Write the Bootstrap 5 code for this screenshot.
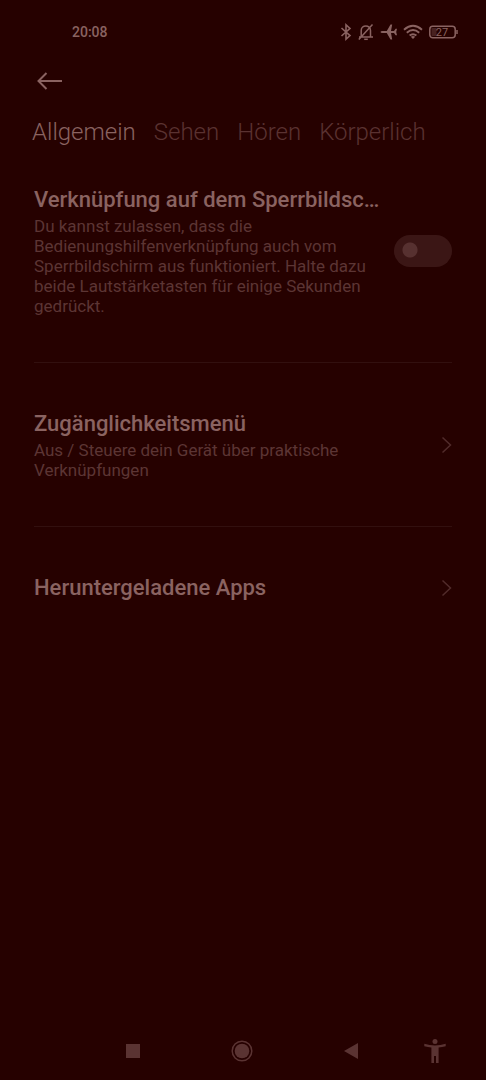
<!DOCTYPE html>
<html lang="de">
<head>
<meta charset="utf-8">
<meta name="viewport" content="width=device-width, initial-scale=1">
<title>Bedienungshilfen</title>
<link href="https://cdn.jsdelivr.net/npm/bootstrap@5.3.0/dist/css/bootstrap.min.css" rel="stylesheet">
<style>
  :root { --bg: #260100; --strong: #8a6361; --tab-off: #5a3231; --muted: #5c3534; --line: #32100f; }
  body { background: var(--bg); color: var(--strong); font-family: Roboto, "Noto Sans", sans-serif; }
  svg { display: block; flex: none; }
  .status { height: 64px; padding: 0 28px 0 72px; font-size: 14px; font-weight: 500; }
  .status-icons { gap: 5px; }
  .topbar { height: 34px; padding: 0 34px; }
  .plain-btn { background: none; border: 0; padding: 0; color: inherit; }
  .tabs { height: 68px; padding: 0 32px; gap: 18px; font-size: 24px; font-weight: 300; }
  .tabs a { color: var(--tab-off); text-decoration: none; }
  .tabs a.active { color: var(--strong); }
  .settings { padding: 0 34px; }
  .setting { padding: 47px 0 46px; gap: 20px; color: inherit; text-decoration: none; }
  .setting + .setting { border-top: 1px solid var(--line); }
  .setting:first-child { padding-top: 20px; }
  .setting-text { flex: 1; min-width: 0; }
  .setting-title { display: block; font-size: 22px; line-height: 28px; font-weight: 500; margin: 0; }
  .setting-desc { display: block; font-size: 17px; line-height: 20px; margin: 2px 0 0; color: var(--muted); }
  .chevron { color: #512b2a; }
  .form-switch .form-check-input.toggle {
    width: 58px; height: 32px; border: 0; border-radius: 16px; margin: 0; float: none;
    background: radial-gradient(circle at 16px 15px, #573130 7px, transparent 8px) #3b1615;
    box-shadow: none;
  }
  .form-switch .form-check-input.toggle:checked {
    background: radial-gradient(circle at 42px 15px, #8a6361 7px, transparent 8px) #4b2423;
  }
  .sysnav { height: 58px; padding: 0 22px 0 78px; color: #5a3332; }
  .sysnav button { width: 58px; height: 48px; }
</style>
</head>
<body>
<div class="d-flex flex-column min-vh-100">
  <header>
    <div class="status d-flex align-items-center justify-content-between">
      <span>20:08</span>
      <div class="status-icons d-flex align-items-center">
        <svg width="12" height="18" viewBox="0 0 12 18" fill="none" stroke="currentColor" stroke-width="1.6" aria-label="Bluetooth"><path d="M1.5 5 10 12.6 6 16.2V1.8l4 3.6L1.5 13"/></svg>
        <svg width="18" height="18" viewBox="0 0 18 18" fill="none" stroke="currentColor" stroke-width="1.5" aria-label="Stumm"><path d="M2 14H16M4.2 13.6V7.5c0-6 9.3-6 9.3 0v6.100M1.800 16.500 15.500 1.500"/><path d="M7.200 16.300h3.600"/></svg>
        <svg width="18" height="18" viewBox="0 0 18 18" fill="currentColor" aria-label="Flugmodus"><path d="M.5 9Q.5 8 2.500 8H6.800L10.500 1.500H12.200L11 8H14L15.600 5.800H17L16.200 9 17 12.200H15.600L14 10H11L12.200 16.500H10.500L6.800 10H2.500Q.5 10 .5 9Z"/></svg>
        <svg width="20" height="18" viewBox="0 0 20 18" fill="none" stroke="currentColor" stroke-width="1.900" aria-label="WLAN"><path d="M1 6.700Q10-1 19 6.700M3.800 9.700Q10 4.300 16.200 9.700M6.600 12.600Q10 9.800 13.400 12.600"/><path d="M7.800 13.700Q10 12.200 12.200 13.700L10 16Z" fill="currentColor" stroke="none"/></svg>
        <svg width="30" height="18" viewBox="0 0 30 18" role="img" aria-label="Akku 27 Prozent"><rect x="3.500" y="5" width="5" height="8" fill="#482120"/><rect x="1.800" y="3.300" width="25.400" height="11.500" rx="3" fill="none" stroke="currentColor" stroke-width="1.500"/><path d="M29 7v4" stroke="currentColor" stroke-width="1.500"/><text x="14" y="13" text-anchor="middle" font-size="11" font-weight="400" fill="currentColor">27</text></svg>
      </div>
    </div>
    <div class="topbar d-flex align-items-center">
      <button class="plain-btn" type="button" aria-label="Zurück"><svg width="30" height="20" viewBox="0 0 30 20" fill="none" stroke="currentColor" stroke-width="2"><path d="M28 10H5M12.500 2 4.500 10l8 8"/></svg></button>
    </div>
    <nav class="tabs d-flex align-items-center" aria-label="Kategorien">
      <a class="active" href="#" aria-current="page">Allgemein</a>
      <a href="#">Sehen</a>
      <a href="#">Hören</a>
      <a href="#">Körperlich</a>
    </nav>
  </header>
  <main class="settings flex-grow-1">
    <div class="setting d-flex align-items-center">
      <label class="setting-text" for="lockscreen">
        <span class="setting-title text-nowrap">Verknüpfung auf dem Sperrbildsc…</span>
        <span class="setting-desc">Du kannst zulassen, dass die Bedienungshilfenverknüpfung auch vom Sperrbildschirm aus funktioniert. Halte dazu beide Lautstärketasten für einige Sekunden gedrückt.</span>
      </label>
      <div class="form-switch p-0 d-flex"><input class="form-check-input toggle" type="checkbox" role="switch" id="lockscreen"></div>
    </div>
    <a class="setting d-flex align-items-center" href="#">
      <span class="setting-text">
        <span class="setting-title">Zugänglichkeitsmenü</span>
        <span class="setting-desc">Aus / Steuere dein Gerät über praktische Verknüpfungen</span>
      </span>
      <svg class="chevron" width="11" height="18" viewBox="0 0 11 18" fill="none" stroke="currentColor" stroke-width="1.500"><path d="M1.500 1.500 9.500 9l-8 7.500"/></svg>
    </a>
    <a class="setting d-flex align-items-center" href="#">
      <span class="setting-text"><span class="setting-title">Heruntergeladene Apps</span></span>
      <svg class="chevron" width="11" height="18" viewBox="0 0 11 18" fill="none" stroke="currentColor" stroke-width="1.500"><path d="M1.500 1.500 9.500 9l-8 7.500"/></svg>
    </a>
  </main>
  <footer class="sysnav d-flex align-items-center">
    <div class="d-flex flex-grow-1 justify-content-around">
      <button class="plain-btn d-flex align-items-center justify-content-center" type="button" aria-label="Letzte Apps"><svg width="14" height="14" viewBox="0 0 14 14"><path d="M0 0h14v14H0z" fill="currentColor"/></svg></button>
      <button class="plain-btn d-flex align-items-center justify-content-center" type="button" aria-label="Startbildschirm"><svg width="22" height="22" viewBox="0 0 22 22"><circle cx="11" cy="11" r="9.800" fill="none" stroke="currentColor" stroke-width="1.500"/><circle cx="11" cy="11" r="7.300" fill="currentColor"/></svg></button>
      <button class="plain-btn d-flex align-items-center justify-content-center" type="button" aria-label="Zurück"><svg width="14" height="16" viewBox="0 0 14 16"><path d="M14 0v16L0 8z" fill="currentColor"/></svg></button>
    </div>
    <button class="plain-btn d-flex align-items-center justify-content-center" type="button" aria-label="Bedienungshilfen"><svg width="22" height="24" viewBox="0 0 22 24" fill="currentColor"><circle cx="11" cy="2.600" r="2.500"/><path d="M.3 4.800Q11 8 21.700 4.800V7.200Q18 8.300 14.600 8.500V24H12V17H10V24H7.400V8.500Q4 8.300.3 7.200Z"/></svg></button>
  </footer>
</div>
<script src="https://cdn.jsdelivr.net/npm/bootstrap@5.3.0/dist/js/bootstrap.bundle.min.js"></script>
</body>
</html>
